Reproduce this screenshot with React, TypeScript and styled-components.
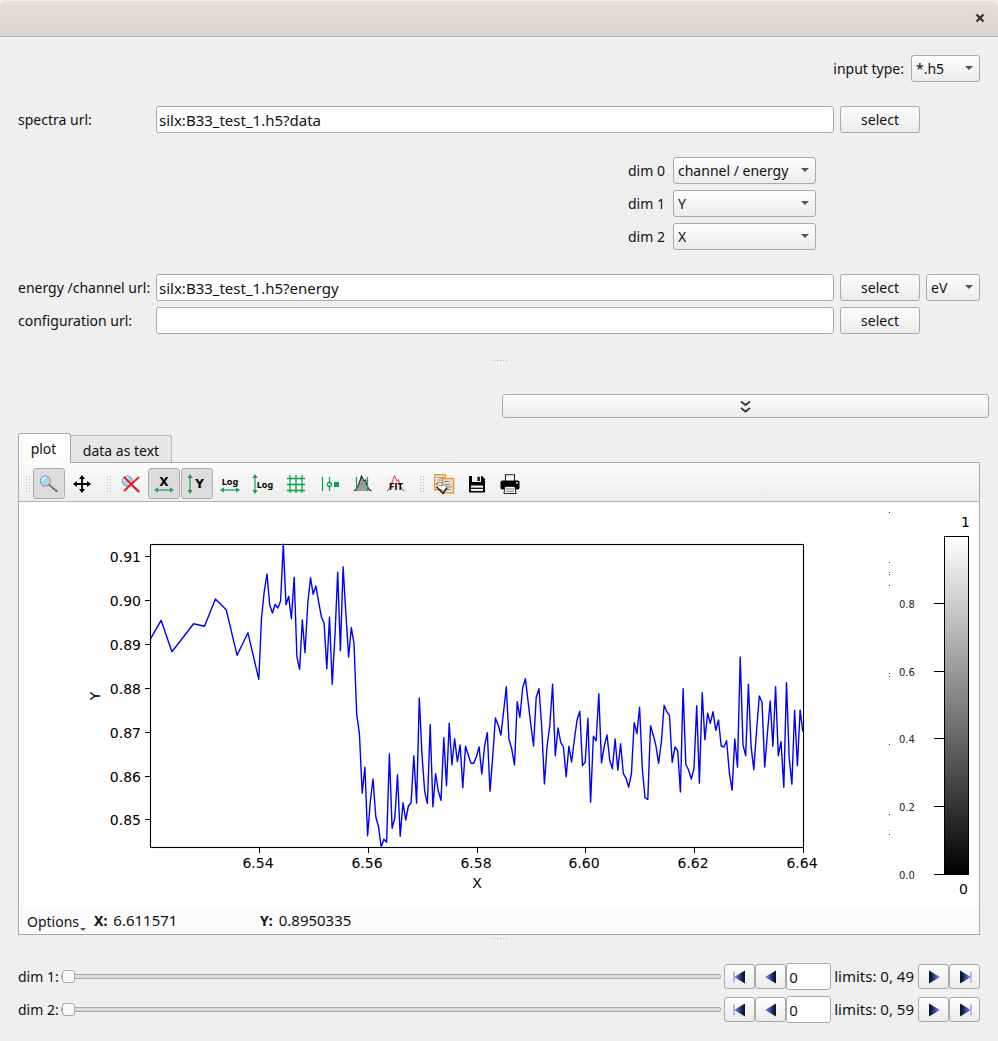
import React, { useState } from "react";
import styled, { createGlobalStyle, css } from "styled-components";

const GlobalStyle = createGlobalStyle`
  * { box-sizing: border-box; }
  body { margin: 0; background: #efefef; }
  body, button, input, select {
    font-family: "Noto Sans", "Open Sans", sans-serif;
    font-size: 14px;
    line-height: 19px;
    color: #111;
  }
`;

const line = "#a9a9a9";

const raised = css`
  border: 1px solid ${line};
  border-radius: 3px;
  background: linear-gradient(#fefefe, #ebebeb);
`;

const Window = styled.div`
  min-height: 100vh;
  display: flex;
  flex-direction: column;
  background: #efefef;
`;

const TitleBar = styled.header`
  height: 37px;
  display: flex;
  align-items: center;
  justify-content: flex-end;
  padding: 0 13px 2px;
  background: linear-gradient(#e2dfdc, #d9d5d1);
  border-top: 1px solid #efedeb;
  border-bottom: 1px solid #bdb3a9;
  border-radius: 7px 7px 0 0;
`;

const CloseButton = styled.button`
  width: 10px;
  height: 10px;
  padding: 0;
  border: 0;
  background: none;
  display: flex;
`;

const Form = styled.form`
  display: flex;
  flex-direction: column;
  gap: 24px;
  padding: 18px 18px 0;
`;

const TypeRow = styled.div`
  display: flex;
  justify-content: flex-end;
  align-items: center;
  gap: 7px;
`;

const UrlGrid = styled.div`
  display: grid;
  grid-template-columns: 132px 1fr 80px 54px;
  align-items: center;
  gap: 6px;
`;

const DimGrid = styled.div`
  display: grid;
  grid-template-columns: 39px 143px;
  justify-content: end;
  align-items: center;
  gap: 6px;
  padding-right: 164px;
`;

const Label = styled.label`
  white-space: nowrap;
`;

const TextBox = styled.input`
  width: 100%;
  height: 27px;
  padding: 0 2px;
  border: 1px solid ${line};
  border-radius: 3px;
  background: #fff;
  font-size: 15px;
`;

const PushButton = styled.button`
  ${raised}
  height: 27px;
  padding: 0;
`;

const ComboFrame = styled.span<{ $width: number }>`
  display: block;
  position: relative;
  width: ${(p) => p.$width}px;
  &::after {
    content: "";
    position: absolute;
    right: 7px;
    top: 11px;
    border: 4px solid transparent;
    border-top-color: #555;
    pointer-events: none;
  }
`;

const ComboSelect = styled.select`
  ${raised}
  appearance: none;
  width: 100%;
  height: 27px;
  padding: 0 4px;
`;

const SplitterHandle = styled.div<{ $height: number }>`
  height: ${(p) => p.$height}px;
  display: flex;
  justify-content: center;
  align-items: center;
  &::before {
    content: "";
    width: 16px;
    height: 1px;
    background: repeating-linear-gradient(90deg, #b4b4b4 0 1px, transparent 1px 3px);
  }
`;

const CollapseRow = styled.div`
  display: grid;
  grid-template-columns: 1fr 1fr;
  gap: 6px;
  padding: 8px 9px 15px;
`;

const CollapseButton = styled.button`
  ${raised}
  grid-column: 2;
  height: 24px;
  padding: 1px 0 0;
  display: flex;
  justify-content: center;
  align-items: center;
`;

const Tabs = styled.div`
  display: flex;
  align-items: flex-end;
  padding: 0 18px;
`;

const Tab = styled.button<{ $active?: boolean }>`
  height: ${(p) => (p.$active ? 30 : 27)}px;
  width: ${(p) => (p.$active ? 53 : 102)}px;
  margin-bottom: ${(p) => (p.$active ? -1 : 0)}px;
  margin-left: ${(p) => (p.$active ? 0 : -1)}px;
  padding: ${(p) => (p.$active ? "0 2px 0 0" : "2px 0 0")};
  position: relative;
  z-index: ${(p) => (p.$active ? 1 : 0)};
  border: 1px solid ${(p) => (p.$active ? line : "#bbb")};
  border-bottom: 0;
  border-radius: 3px 3px 0 0;
  background: ${(p) => (p.$active ? "linear-gradient(#fff, #fcfcfc)" : "#e6e6e6")};
`;

const Panel = styled.section`
  margin: 0 18px;
  border: 1px solid ${line};
  background: #fff;
`;

const Toolbar = styled.div`
  height: 39px;
  display: flex;
  align-items: center;
  gap: 1px;
  padding-top: 3px;
  background: linear-gradient(#fcfcfc, #ededed);
  border-bottom: 1px solid #b4b4b4;
`;

const Grip = styled.span<{ $width: number }>`
  width: ${(p) => p.$width}px;
  height: 17px;
  padding-left: 3px;
  display: flex;
  justify-content: center;
  &::before {
    content: "";
    width: 5px;
    background: radial-gradient(circle, #b8b8b8 0 1px, transparent 1px) 0 0 / 3px 3px;
  }
`;

const ToolButton = styled.button<{ $on?: boolean }>`
  width: 32px;
  height: 31px;
  padding: 0;
  display: flex;
  align-items: center;
  justify-content: center;
  border: 1px solid ${(p) => (p.$on ? "#acacac" : "transparent")};
  border-radius: 3px;
  background: ${(p) => (p.$on ? "#dcdcdc" : "none")};
`;

const PlotArea = styled.div`
  display: grid;
  grid-template-columns: 1fr 90px;
  align-items: start;
  padding-top: 1px;
`;

const Drawing = styled.svg`
  display: block;
  width: 100%;
  height: auto;
  font-family: "DejaVu Sans", sans-serif;
  font-size: 14px;
`;

const PositionBar = styled.div`
  height: 26px;
  display: flex;
  align-items: center;
  padding: 0 0 2px 8px;
  background: #fcfcfc;
`;

const OptionsButton = styled.button`
  position: relative;
  width: 59px;
  padding: 2px 0 0;
  border: 0;
  background: none;
  text-align: left;
  &::after {
    content: "";
    position: absolute;
    right: 0;
    bottom: 0;
    border: 3px solid transparent;
    border-top-color: #555;
    border-bottom-width: 0;
  }
`;

const Readout = styled.output`
  display: flex;
  gap: 6px;
  width: 158px;
  margin-left: 8px;
  font-size: 15px;
  b {
    font-size: 14px;
  }
`;

const Sliders = styled.div`
  display: flex;
  flex-direction: column;
  gap: 6px;
  padding: 21px 18px 18px;
`;

const SliderRow = styled.div`
  display: flex;
  align-items: center;
`;

const Range = styled.input`
  appearance: none;
  flex: 1;
  min-width: 0;
  height: 13px;
  margin: 0 3px 0 2px;
  background: none;
  &::-webkit-slider-runnable-track {
    height: 5px;
    border: 1px solid ${line};
    border-radius: 2px;
    background: #dcdcdc;
  }
  &::-webkit-slider-thumb {
    appearance: none;
    width: 13px;
    height: 13px;
    margin-top: -5px;
    border: 1px solid ${line};
    border-radius: 3px;
    background: linear-gradient(#fff, #f4f4f4);
  }
`;

const StepButton = styled.button`
  ${raised}
  width: 31px;
  height: 25px;
  padding: 0;
  display: flex;
  align-items: center;
  justify-content: center;
`;

const FrameInput = styled.input`
  width: 45px;
  height: 27px;
  padding: 0 2px;
  border: 1px solid ${line};
  border-radius: 3px;
  background: #fff;
  font-size: 15px;
`;

const Limits = styled.span`
  margin: 0 4px 0 3px;
  font-size: 15px;
  white-space: nowrap;
`;

function Combo({ id, width, options, label }: { id: string; width: number; options: string[]; label?: string }) {
  return (
    <ComboFrame $width={width}>
      <ComboSelect id={id} aria-label={label}>
        {options.map((o) => (
          <option key={o}>{o}</option>
        ))}
      </ComboSelect>
    </ComboFrame>
  );
}

/* ---- toolbar icons, 22px grid ---- */

const green = "#10a050";

const Icon = ({ children }: { children: React.ReactNode }) => (
  <svg width="22" height="22" viewBox="0 0 22 22" fill="none" fontFamily="DejaVu Sans" fontWeight="bold">
    {children}
  </svg>
);

const Lens = () => (
  <>
    <path d="M11 11.5l7.5 6.5" stroke="#75606a" strokeWidth="2.2" strokeLinecap="round" />
    <path d="M12 11.5l6 5.2" stroke="#c9b9c0" strokeWidth="0.8" />
    <circle cx="7.3" cy="8" r="5" fill="#a6d8ee" stroke="#8c9aa2" strokeWidth="1.1" />
    <path d="M4 8a3.4 3.4 0 0 1 4-3.4" stroke="#e8f8ff" strokeWidth="1.5" />
  </>
);

const HArrow = () => (
  <>
    <path d="M3 17h16" stroke={green} strokeWidth="1.2" />
    <path d="M1 17l4-2.6v5.2zM21 17l-4-2.6v5.2z" fill={green} />
  </>
);

const VArrow = ({ x }: { x: number }) => (
  <g transform={`translate(${x} 0)`}>
    <path d="M0 3v16" stroke={green} strokeWidth="1.2" />
    <path d="M0 1l-2.6 4h5.2zM0 21l-2.6-4h5.2z" fill={green} />
  </g>
);

const icons = {
  zoom: <Lens />,
  pan: (
    <>
      <path d="M11 4v14M4 11h14" stroke="#000" strokeWidth="1.8" />
      <path d="M11 2l-3 4h6zM11 20l-3-4h6zM2 11l4-3v6zM20 11l-4-3v6z" fill="#000" />
    </>
  ),
  reset: (
    <>
      <Lens />
      <path d="M4 4l15 15M19 4L4 18" stroke="#ee1c25" strokeWidth="1.9" />
    </>
  ),
  xauto: (
    <>
      <text x="11" y="13" fontSize="12" textAnchor="middle" fill="#000">X</text>
      <HArrow />
    </>
  ),
  yauto: (
    <>
      <VArrow x={4} />
      <text x="13.5" y="15" fontSize="12" textAnchor="middle" fill="#000">Y</text>
    </>
  ),
  xlog: (
    <>
      <text x="11" y="12" fontSize="9" textAnchor="middle" fill="#000" fontFamily="Noto Sans">Log</text>
      <HArrow />
    </>
  ),
  ylog: (
    <>
      <VArrow x={3} />
      <text x="13" y="15" fontSize="9" textAnchor="middle" fill="#000" fontFamily="Noto Sans">Log</text>
    </>
  ),
  grid: <path d="M5 2v18M11 2v18M17 2v18M2 5.5h18M2 11.5h18M2 17.5h18" stroke={green} strokeWidth="1.3" />,
  curve: (
    <>
      <path d="M4.5 4v14M11.5 4v14" stroke={green} strokeWidth="1.2" />
      <circle cx="11.5" cy="11.5" r="2" fill="#f4f4f4" stroke={green} strokeWidth="1.3" />
      <rect x="16" y="9" width="5" height="5" fill={green} />
    </>
  ),
  peak: (
    <>
      <path d="M3 18c3-1 4-5 5.5-9l2-6 2 6 2-2c1 5 2 9 6 11z" fill="#9a9a9a" />
      <path d="M3 18c3-1 4-5 5.5-9l2-6 2.5 5 1.5-1c1 5 2 9 6 11" stroke="#222" strokeWidth="1.1" />
      <path d="M5.500 4v14M16.500 4v14" stroke={green} strokeWidth="1.2" />
    </>
  ),
  fit: (
    <>
      <path d="M3 18c3-2 4-6 5.500-10l2-5 2.500 5 1.500-1c1 5 2 9 6 11" stroke="#ee4a50" strokeWidth="1.1" />
      <text x="12" y="17" fontSize="8" textAnchor="middle" fill="#000">FIT</text>
    </>
  ),
  copy: (
    <>
      <rect x="1.8" y="1.8" width="10.500" height="15" fill="#f2ede4" stroke="#f0962c" strokeWidth="1.5" />
      <path d="M4 4.5h7M4 7h5M4 9.5h5" stroke="#8a8a8a" />
      <rect x="9.5" y="5.5" width="11" height="14.5" fill="#e4e0d8" stroke="#f0962c" strokeWidth="1.5" />
      <path d="M11 8.500h6M12 11.500h5M14 14h5M14 16.500h4" stroke="#8a8a8a" />
      <path d="M3.500 10c0 4 2 6.500 5.500 7v2.500l5-5.500-5-3v2c-2.500 0-4-1-5.500-3z" fill="#fff" stroke="#555" strokeWidth="0.7" />
      <path d="M3.500 14l6.500 6.500 4-5.500" stroke="#222" strokeWidth="1.3" />
    </>
  ),
  save: (
    <>
      <path d="M3 3h13l3 3v13.5H3z" fill="#000" />
      <path d="M6 3h9v6H6z" fill="#f3f3f3" />
      <path d="M11.5 3.800h2.300v4.200h-2.300z" fill="#000" />
      <path d="M5 12.500h12v5.500H5z" fill="#f3f3f3" />
      <path d="M5 15.300h12" stroke="#000" strokeWidth="1.2" />
    </>
  ),
  print: (
    <>
      <path d="M6.5 8V1.700h9V8" fill="#fff" stroke="#222" strokeWidth="1.1" />
      <rect x="1.5" y="7.5" width="19" height="9" rx="2" fill="#000" />
      <circle cx="18" cy="10" r="0.9" fill="#fff" />
      <path d="M6 13.500h10l1 7H5z" fill="#fff" stroke="#222" strokeWidth="1" />
      <path d="M7 16h8M7 18.300h8" stroke="#777" />
    </>
  ),
};

type Tool = { icon: keyof typeof icons; title: string; on?: boolean };

const toolGroups: Tool[][] = [
  [
    { icon: "zoom", title: "Zoom", on: true },
    { icon: "pan", title: "Pan" },
  ],
  [
    { icon: "reset", title: "Reset zoom" },
    { icon: "xauto", title: "X autoscale", on: true },
    { icon: "yauto", title: "Y autoscale", on: true },
    { icon: "xlog", title: "X log scale" },
    { icon: "ylog", title: "Y log scale" },
    { icon: "grid", title: "Grid" },
    { icon: "curve", title: "Curve style" },
    { icon: "peak", title: "Regions" },
    { icon: "fit", title: "Fit" },
  ],
  [
    { icon: "copy", title: "Copy" },
    { icon: "save", title: "Save" },
    { icon: "print", title: "Print" },
  ],
];

/* ---- spectrum: coarse pre-edge, then fine steps; heights in thirds of a plot unit ---- */

const preEdge = [313, 256, 350, 308, 266, 274, 192, 224, 361, 293];
const edge = [
  433, 250, 170, 117, 210, 234, 208, 219, 198, 28, 209, 184, 251, 127, 365, 403, 255, 353, 205, 128, 178, 153, 200,
  246, 264, 401, 246, 448, 300, 112, 347, 95, 232, 366, 278, 325, 538, 595, 775, 697, 902, 800,
];
const postEdge = [
  417, 530, 560, 621, 598, 607, 342, 565, 534, 404, 589, 488, 540, 498, 488, 347, 489, 174, 345, 455, 490, 254, 500,
  401, 453, 481, 293, 437, 250, 374, 296, 365, 315, 443, 319, 344, 370, 370, 350, 321, 402, 318, 278, 454, 350, 234,
  256, 285, 215, 140, 298, 328, 375, 185, 232, 145, 116, 185, 253, 318, 172, 146, 260, 432, 318, 256, 133, 347, 264,
  307, 321, 410, 319, 366, 300, 241, 214, 377, 366, 235, 487, 289, 303, 161, 369, 319, 285, 360, 386, 297, 391, 311,
  400, 415, 441, 402, 248, 281, 202, 385, 473, 478, 257, 284, 317, 370, 305, 196, 215, 227, 367, 321, 333, 456, 146,
  373, 390, 417, 385, 197, 430, 158, 299, 220, 250, 215, 271, 240, 318, 321, 302, 400, 451, 297, 382, 51, 315, 347,
  133, 320, 389, 270, 168, 186, 381, 280, 183, 319, 140, 347, 305, 442, 128, 355, 433, 211, 377, 210, 275,
];

const edgeX = 239.8;

const curvePoints = [
  ...preEdge.map((v, i) => [edgeX + (i - preEdge.length) * 10.86, 32 + v / 3]),
  ...edge.map((v, i) => [edgeX + i * 2.72, 32 + v / 3]),
  ...postEdge.map((v, i) => [edgeX + (edge.length + i) * 2.72, 137 + v / 3]),
]
  .map(([x, y]) => `${x.toFixed(1)},${y.toFixed(1)}`)
  .join(" ");

const xTicks = ["6.54", "6.56", "6.58", "6.60", "6.62", "6.64"].map((t, i) => ({ t, x: 240 + Math.round(i * 108.8) }));
const yTicks = ["0.91", "0.90", "0.89", "0.88", "0.87", "0.86", "0.85"].map((t, i) => ({
  t,
  y: 53 + Math.round(i * 43.9),
}));

function Plot() {
  return (
    <Drawing viewBox="0 0 870 405" role="img" aria-label="Spectrum">
      <polyline points={curvePoints} fill="none" stroke="#0000ff" strokeWidth="1.4" strokeLinejoin="round" />
      <rect x="131.5" y="41.5" width="653" height="303" fill="none" stroke="#000" strokeWidth="1.1" />
      {xTicks.map(({ t, x }) => (
        <g key={t}>
          <path d={`M${x + 0.5} 345v5`} stroke="#000" />
          <text x={x - 1} y="365" textAnchor="middle">{t}</text>
        </g>
      ))}
      {yTicks.map(({ t, y }) => (
        <g key={t}>
          <path d={`M126 ${y + 0.5}h5`} stroke="#000" />
          <text x="122" y={y + 6} textAnchor="end">{t}</text>
        </g>
      ))}
      <text x="458" y="385" textAnchor="middle">X</text>
      <text transform="translate(81 193) rotate(-90)" textAnchor="middle">Y</text>
    </Drawing>
  );
}

const specks = [
  [9, "#222"], [59, "#22c"], [69, "#44e"], [71, "#44e"], [82, "#22c"], [170, "#22c"], [173, "#44e"],
  [241, "#333"], [311, "#222"], [327, "#999"], [331, "#333"],
] as const;

const barTicks = [
  ["0.8", 100], ["0.6", 168], ["0.4", 235], ["0.2", 303], ["0.0", 371],
] as const;

function ColorBar() {
  return (
    <Drawing viewBox="0 0 90 405" role="img" aria-label="Colour scale">
      <defs>
        <linearGradient id="grey" x2="0" y2="1">
          <stop stopColor="#fff" />
          <stop offset="1" stopColor="#000" />
        </linearGradient>
      </defs>
      {specks.map(([y, fill]) => (
        <rect key={y} y={y} width="1" height="1" fill={fill} />
      ))}
      <rect x="55.5" y="33.5" width="24" height="338" fill="url(#grey)" stroke="#000" />
      {barTicks.map(([t, y]) => (
        <g key={t}>
          <path d={`M45 ${y + 0.5}h10`} stroke="#000" />
          <text x="10" y={y + 5} fontSize="10" fill="#222">{t}</text>
        </g>
      ))}
      <text x="81" y="24" textAnchor="end">1</text>
      <text x="79" y="391" textAnchor="end">0</text>
    </Drawing>
  );
}

/* ---- frame stepping buttons ---- */

function StepIcon({ back, end }: { back?: boolean; end?: boolean }) {
  return (
    <svg width="16" height="16" viewBox="0 0 16 16">
      <defs>
        <linearGradient id="step">
          <stop stopColor="#021c2c" />
          <stop offset="0.2" stopColor="#06203a" />
          <stop offset="0.55" stopColor="#434aa8" />
          <stop offset="1" stopColor="#8a90f4" />
        </linearGradient>
      </defs>
      <g transform={back ? "translate(16 0) scale(-1 1)" : undefined}>
        <path d="M3 1.5L14 8 3 14.5z" fill="url(#step)" />
        {end && <path d="M14 2.5v11" stroke="#9a9ad8" strokeWidth="1.3" />}
      </g>
    </svg>
  );
}

function DimSlider({ name, max }: { name: string; max: number }) {
  const [value, setValue] = useState(0);
  const set = (v: number) => setValue(Math.max(0, Math.min(max, v || 0)));
  const id = name.replace(" ", "");
  return (
    <SliderRow>
      <Label htmlFor={`${id}-slider`}>{name}:</Label>
      <Range id={`${id}-slider`} type="range" min={0} max={max} value={value} onChange={(e) => set(+e.target.value)} />
      <StepButton aria-label="First" onClick={() => set(0)}><StepIcon back end /></StepButton>
      <StepButton aria-label="Previous" onClick={() => set(value - 1)}><StepIcon back /></StepButton>
      <FrameInput aria-label={`${name} index`} value={value} onChange={(e) => set(+e.target.value)} />
      <Limits>limits: 0, {max}</Limits>
      <StepButton aria-label="Next" onClick={() => set(value + 1)}><StepIcon /></StepButton>
      <StepButton aria-label="Last" onClick={() => set(max)}><StepIcon end /></StepButton>
    </SliderRow>
  );
}

export default function App() {
  return (
    <Window>
      <GlobalStyle />
      <TitleBar>
        <CloseButton aria-label="Close">
          <svg width="10" height="10" viewBox="0 0 10 10">
            <path d="M1.5 1.5l7 7M8.5 1.5l-7 7" stroke="#2e3436" strokeWidth="2.2" />
          </svg>
        </CloseButton>
      </TitleBar>
      <Form onSubmit={(e) => e.preventDefault()}>
        <TypeRow>
          <Label htmlFor="type">input type:</Label>
          <Combo id="type" width={69} options={["*.h5"]} />
        </TypeRow>
        <UrlGrid>
          <Label htmlFor="spectra">spectra url:</Label>
          <TextBox id="spectra" defaultValue="silx:B33_test_1.h5?data" />
          <PushButton type="button">select</PushButton>
        </UrlGrid>
        <DimGrid>
          <Label htmlFor="d0">dim 0</Label>
          <Combo id="d0" width={143} options={["channel / energy"]} />
          <Label htmlFor="d1">dim 1</Label>
          <Combo id="d1" width={143} options={["Y"]} />
          <Label htmlFor="d2">dim 2</Label>
          <Combo id="d2" width={143} options={["X"]} />
        </DimGrid>
        <UrlGrid>
          <Label htmlFor="energy">energy /channel url:</Label>
          <TextBox id="energy" defaultValue="silx:B33_test_1.h5?energy" />
          <PushButton type="button">select</PushButton>
          <Combo id="unit" width={54} options={["eV"]} label="energy unit" />
          <Label htmlFor="config">configuration url:</Label>
          <TextBox id="config" />
          <PushButton type="button">select</PushButton>
        </UrlGrid>
      </Form>
      <SplitterHandle $height={52} />
      <CollapseRow>
        <CollapseButton aria-label="Collapse">
          <svg width="11" height="13" viewBox="0 0 11 13" fill="none" stroke="#333" strokeWidth="1.8">
            <path d="M1 1.500l4.500 3.500L10 1.500M1 8l4.500 3.500L10 8" />
          </svg>
        </CollapseButton>
      </CollapseRow>
      <Tabs role="tablist">
        <Tab $active role="tab" aria-selected>plot</Tab>
        <Tab role="tab" aria-selected={false}>data as text</Tab>
      </Tabs>
      <Panel>
        <Toolbar>
          {toolGroups.map((group, i) => (
            <React.Fragment key={i}>
              <Grip $width={i === 0 ? 13 : 15} />
              {group.map(({ icon, title, on }) => (
                <ToolButton key={icon} $on={on} aria-label={title}>
                  <Icon>{icons[icon]}</Icon>
                </ToolButton>
              ))}
            </React.Fragment>
          ))}
        </Toolbar>
        <PlotArea>
          <Plot />
          <ColorBar />
        </PlotArea>
        <PositionBar>
          <OptionsButton>Options</OptionsButton>
          <Readout><b>X:</b>6.611571</Readout>
          <Readout><b>Y:</b>0.8950335</Readout>
        </PositionBar>
      </Panel>
      <SplitterHandle $height={7} />
      <Sliders>
        <DimSlider name="dim 1" max={49} />
        <DimSlider name="dim 2" max={59} />
      </Sliders>
    </Window>
  );
}
